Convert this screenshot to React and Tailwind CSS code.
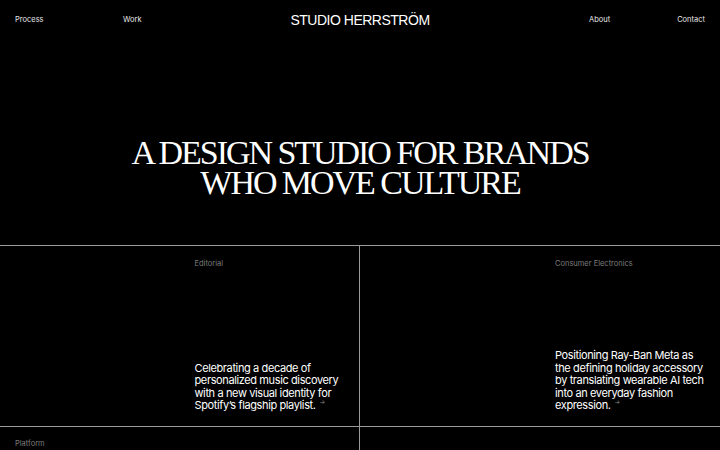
import React from "react";

const projects = [
  {
    tag: "Editorial",
    text: "Celebrating a decade of personalized music discovery with a new visual identity for Spotify’s flagship playlist.",
  },
  {
    tag: "Consumer Electronics",
    text: "Positioning Ray-Ban Meta as the defining holiday accessory by translating wearable AI tech into an everyday fashion expression.",
  },
];

const ProjectCard = ({ tag, text, last }) => {
  return (
    <div className={`grid grid-cols-2 h-[180px] ${last ? "" : "border-r border-[#9a9a9a]"}`}>
      <div />
      <div className="flex flex-col justify-between pl-[15px] pr-[12px] pt-[13px] pb-[14px]">
        <span className="text-[7.5px] leading-[10px] text-[#7d7d7d]">{tag}</span>
        <p className="text-[11px] leading-[12.6px] text-white tracking-[-0.035em]">
          {text}
          <span className="ml-[4px] text-[6px] leading-[6px] align-top text-[#8a8a8a]">→</span>
        </p>
      </div>
    </div>
  );
};

const App = () => {
  return (
    <div className="w-[720px] h-[450px] overflow-hidden bg-black text-white font-['Inter','Liberation_Sans',sans-serif]">
      {/* top navigation */}
      <header className="flex items-center h-[40px] px-[15px] text-[7.5px] text-[#e6e6e6]">
        <div className="flex w-[240px]">
          <a className="w-[108px]">Process</a>
          <a>Work</a>
        </div>
        <div className="flex-1 flex justify-center">
          <span className="font-['Liberation_Sans',sans-serif] text-[14px] tracking-[-0.035em] text-white">
            STUDIO HERRSTRÖM
          </span>
        </div>
        <div className="flex w-[240px] justify-between pl-[124px]">
          <a>About</a>
          <a>Contact</a>
        </div>
      </header>

      {/* headline */}
      <section className="h-[205px] flex items-center justify-center pt-[50px]">
        <h1 className="font-['Liberation_Serif',serif] text-[34px] leading-[30px] tracking-[-0.06em] text-center">
          A DESIGN STUDIO FOR BRANDS
          <br />
          WHO MOVE CULTURE
        </h1>
      </section>

      {/* work grid */}
      <section className="border-t border-[#9a9a9a] grid grid-cols-2">
        {projects.map((p, i) => (
          <ProjectCard key={p.tag} tag={p.tag} text={p.text} last={i === 1} />
        ))}
      </section>
      <section className="border-t border-[#9a9a9a] grid grid-cols-2">
        <div className="border-r border-[#9a9a9a] h-[40px] px-[15px] pt-[12px]">
          <span className="block text-[7.5px] leading-[10px] text-[#7d7d7d]">Platform</span>
        </div>
        <div />
      </section>
    </div>
  );
};

export default App;
